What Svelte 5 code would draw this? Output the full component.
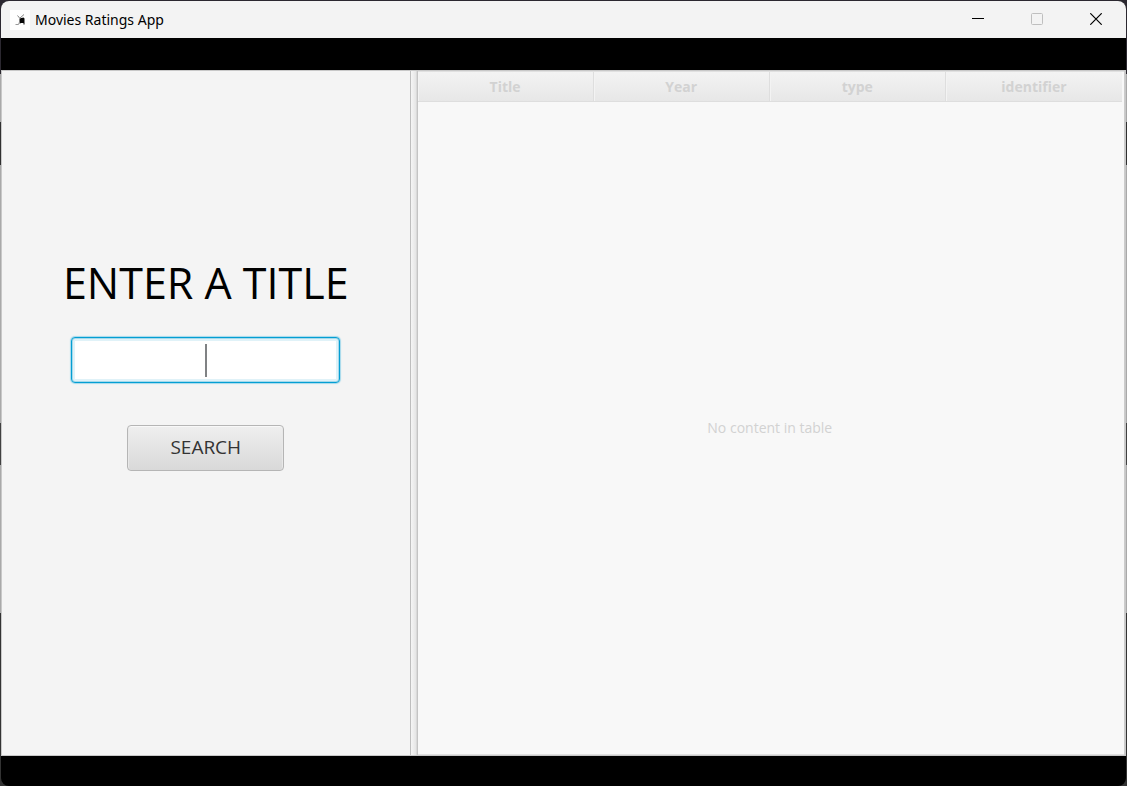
<script>
  const columns = ['Title', 'Year', 'type', 'identifier'];
  let query = $state('');
  let focused = $state(true);

  function submit(event) {
    event.preventDefault();
  }
</script>

<div class="desktop">
  <div class="window">
    <header class="titlebar">
      <svg class="app-icon" viewBox="0 0 20 20" aria-hidden="true">
        <rect width="20" height="20" fill="#fff" />
        <path d="M9.5 8.5 13.5 7.5 14.5 8.5V14.5H13.5V13H10.5V13.5H9.5Z" fill="#080808" />
        <path d="M7.5 5.5 10 8.5M10 8 14 4.5" fill="none" stroke="#777" stroke-width=".9" />
        <path d="M5.5 14.5H8.5L9.5 12" fill="none" stroke="#999" stroke-width="1" />
      </svg>
      <span class="app-name">Movies Ratings App</span>
      <div class="controls">
        <button type="button" aria-label="Minimize">
          <svg viewBox="0 0 12 12"><path d="M0 5.5H12" stroke="#000" /></svg>
        </button>
        <button type="button" aria-label="Maximize" disabled>
          <svg viewBox="0 0 12 12"><rect x=".5" y=".5" width="11" height="11" rx="1" fill="none" stroke="#bfbfbf" /></svg>
        </button>
        <button type="button" aria-label="Close">
          <svg viewBox="0 0 12 12"><path d="M.3.3 11.7 11.7M11.7.3.3 11.7" stroke="#000" stroke-width="1.2" /></svg>
        </button>
      </div>
    </header>

    <main class="split">
      <form class="search" onsubmit={submit}>
        <label for="title">ENTER A TITLE</label>
        <div class="field">
          <input
            id="title"
            type="text"
            autocomplete="off"
            bind:value={query}
            onfocus={() => (focused = true)}
            onblur={() => (focused = false)}
          />
          {#if focused && !query}<span class="caret"></span>{/if}
        </div>
        <button class="submit" type="submit">SEARCH</button>
      </form>

      <div class="divider"></div>

      <section class="results">
        <table>
          <thead>
            <tr>
              {#each columns as column}
                <th scope="col">{column}</th>
              {/each}
            </tr>
          </thead>
          <tbody>
            <tr><td colspan={columns.length}>No content in table</td></tr>
          </tbody>
        </table>
      </section>
    </main>
  </div>
</div>

<style>
  :global(body) {
    margin: 0;
  }

  .desktop {
    box-sizing: border-box;
    height: 100vh;
    padding: 1px 1px 0;
    background: linear-gradient(
      #2b2830 0 74px,
      #a9a9a9 74px 122px,
      #303030 122px 165px,
      #a9a9a9 165px 423px,
      #404040 423px 465px,
      #a9a9a9 465px 613px,
      #333 613px
    );
    font-family: "Open Sans", "Noto Sans", sans-serif;
  }

  .window {
    display: flex;
    flex-direction: column;
    box-sizing: border-box;
    height: 100%;
    padding-bottom: 30px;
    overflow: hidden;
    border-radius: 8px;
    background: #000;
  }

  .titlebar {
    display: flex;
    align-items: center;
    flex: none;
    height: 37px;
    padding: 0 1px 0 9px;
    margin-bottom: 32px;
    background: #f3f3f3;
  }

  .app-icon {
    width: 20px;
    height: 20px;
    margin-right: 5px;
  }

  .app-name {
    font-family: "Noto Sans", sans-serif;
    font-size: 14px;
    color: #000;
  }

  .controls {
    display: flex;
    align-self: stretch;
    margin-left: auto;
    padding-bottom: 1px;
  }

  .controls button {
    display: grid;
    place-items: center;
    width: 59px;
    padding: 0;
    border: 0;
    background: none;
  }

  .controls svg {
    width: 12px;
    height: 12px;
  }

  .split {
    display: flex;
    flex: 1;
    min-height: 0;
    box-sizing: border-box;
    border: 1px solid #c8c8c8;
    background: #f4f4f4;
  }

  .search {
    display: flex;
    flex: 409 1 0;
    flex-direction: column;
    align-items: center;
    justify-content: center;
    padding-bottom: 102px;
  }

  .search label {
    margin-bottom: 24px;
    font-size: 43px;
    line-height: 60px;
    white-space: nowrap;
    color: #000;
  }

  .field {
    position: relative;
    width: 66%;
    margin-bottom: 42px;
  }

  .field input {
    display: block;
    box-sizing: border-box;
    width: 100%;
    height: 46px;
    padding: 0 8px;
    border: 1px solid #039ed3;
    border-radius: 4px;
    outline: 0;
    background: #fff;
    box-shadow: 0 0 1px 1px #a5d9eb, inset 0 0 0 1px #a5d9eb, inset 0 0 0 3px #e0f2f8;
    font: 20px "Open Sans", sans-serif;
    text-align: center;
  }

  .caret {
    position: absolute;
    top: 7px;
    left: 50%;
    width: 2px;
    height: 33px;
    margin-left: -1px;
    background: #808284;
    pointer-events: none;
  }

  .submit {
    width: 157px;
    height: 46px;
    padding: 0 0 2px;
    border: 1px solid #b5b5b5;
    border-radius: 4px;
    background: linear-gradient(#efefef, #d9d9d9);
    box-shadow: inset 0 1px #f8f8f8, inset 1px 0 #e8e8e8, inset -1px 0 #e8e8e8;
    font: 19px "Open Sans", sans-serif;
    color: #333;
  }

  .divider {
    flex: none;
    width: 6px;
    border-left: 1px solid #bebebe;
    background: linear-gradient(90deg, #f5f5f5, #e6e6e6 80%, #d0d0d0);
  }

  .results {
    flex: 707 1 0;
    box-sizing: border-box;
    padding: 1px 2px 1px 0;
    border-left: 1px solid #c4c4c4;
    border-right: 1px solid #ccc;
    background: #f8f8f8;
    box-shadow: inset 0 1px #e0e0e0, inset 0 -1px #e0e0e0;
  }

  table {
    width: 100%;
    height: 100%;
    table-layout: fixed;
    border-collapse: separate;
    border-spacing: 0;
    font-size: 14px;
    color: #d2d2d2;
  }

  th {
    box-sizing: border-box;
    height: 30px;
    padding: 0;
    border-right: 1px solid #dedede;
    border-bottom: 1px solid #dedede;
    background: linear-gradient(#f3f3f3, #e7e7e7);
    box-shadow: inset 1px 0 #f3f3f3;
    font-weight: 700;
    line-height: 20px;
    text-align: center;
  }

  th:last-child {
    border-right: 0;
  }

  td {
    padding: 0 0 2px;
    text-align: center;
    vertical-align: middle;
  }
</style>
